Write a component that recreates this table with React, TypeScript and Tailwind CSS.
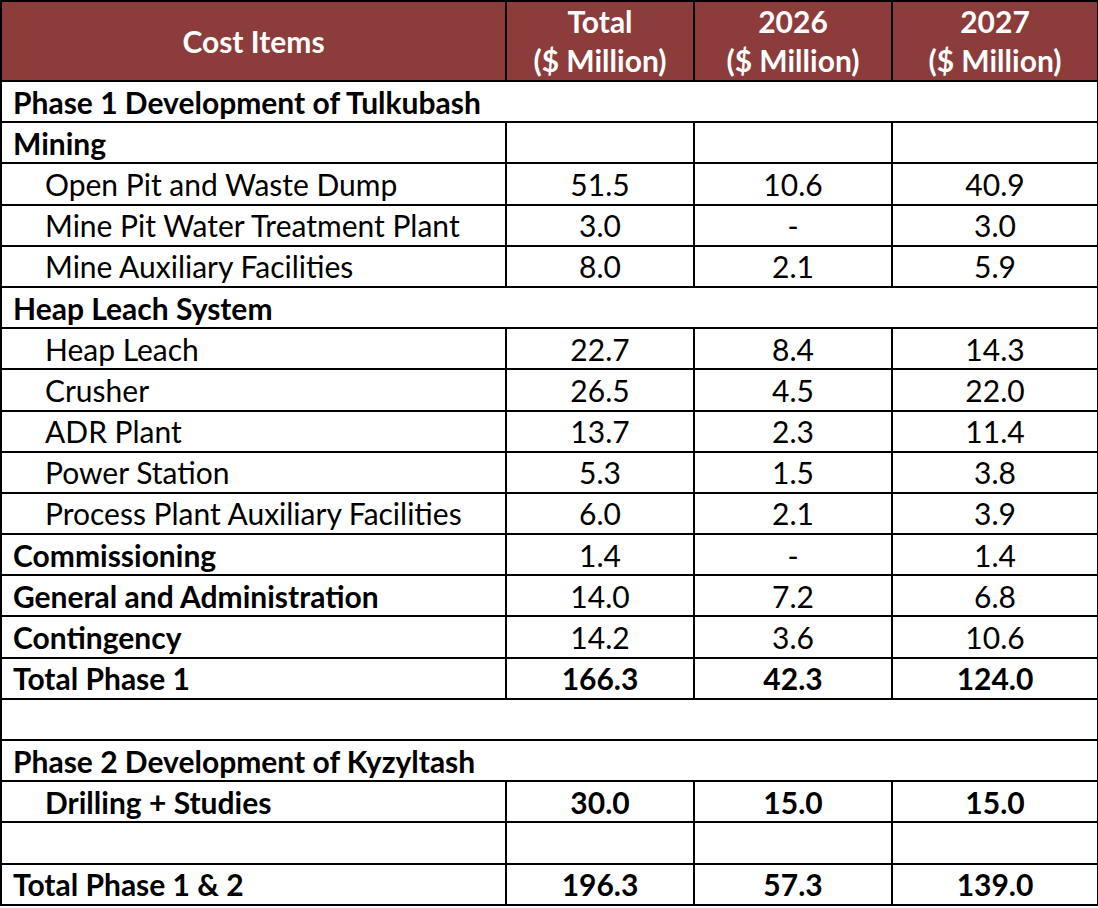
import React from "react";

type Row =
  | { kind: "span"; label: string; bold?: boolean }
  | { kind: "blankSpan" }
  | {
      kind: "data";
      label: string;
      indent?: boolean;
      labelBold?: boolean;
      valuesBold?: boolean;
      values: [string, string, string];
    };

const rows: Row[] = [
  { kind: "span", label: "Phase 1 Development of Tulkubash" },
  { kind: "data", label: "Mining", labelBold: true, values: ["", "", ""] },
  { kind: "data", label: "Open Pit and Waste Dump", indent: true, values: ["51.5", "10.6", "40.9"] },
  { kind: "data", label: "Mine Pit Water Treatment Plant", indent: true, values: ["3.0", "-", "3.0"] },
  { kind: "data", label: "Mine Auxiliary Facilities", indent: true, values: ["8.0", "2.1", "5.9"] },
  { kind: "span", label: "Heap Leach System" },
  { kind: "data", label: "Heap Leach", indent: true, values: ["22.7", "8.4", "14.3"] },
  { kind: "data", label: "Crusher", indent: true, values: ["26.5", "4.5", "22.0"] },
  { kind: "data", label: "ADR Plant", indent: true, values: ["13.7", "2.3", "11.4"] },
  { kind: "data", label: "Power Station", indent: true, values: ["5.3", "1.5", "3.8"] },
  { kind: "data", label: "Process Plant Auxiliary Facilities", indent: true, values: ["6.0", "2.1", "3.9"] },
  { kind: "data", label: "Commissioning", labelBold: true, values: ["1.4", "-", "1.4"] },
  { kind: "data", label: "General and Administration", labelBold: true, values: ["14.0", "7.2", "6.8"] },
  { kind: "data", label: "Contingency", labelBold: true, values: ["14.2", "3.6", "10.6"] },
  { kind: "data", label: "Total Phase 1", labelBold: true, valuesBold: true, values: ["166.3", "42.3", "124.0"] },
  { kind: "blankSpan" },
  { kind: "span", label: "Phase 2 Development of Kyzyltash" },
  { kind: "data", label: "Drilling + Studies", indent: true, labelBold: true, valuesBold: true, values: ["30.0", "15.0", "15.0"] },
  { kind: "data", label: "", values: ["", "", ""] },
  { kind: "data", label: "Total Phase 1 & 2", labelBold: true, valuesBold: true, values: ["196.3", "57.3", "139.0"] },
];

const cell = "border-2 border-black h-[41.2px] p-0 leading-none";

export default function App() {
  return (
    <div className="bg-white w-[1098px] h-[908px] text-black" style={{ fontFamily: '"Lato", "Open Sans", sans-serif' }}>
      <table className="table-fixed border-collapse w-[1097px] text-[30px]">
        <colgroup>
          <col className="w-[505px]" />
          <col className="w-[188px]" />
          <col className="w-[198px]" />
          <col className="w-[206px]" />
        </colgroup>
        <thead>
          <tr className="bg-[#8b3c3b] text-white font-bold h-[80px]">
            <th className="border-2 border-black p-0 text-center align-middle leading-[39px]">Cost Items</th>
            {["Total", "2026", "2027"].map((h) => (
              <th key={h} className="border-2 border-black p-0 text-center align-middle leading-[39px]">
                <div>{h}</div>
                <div>($ Million)</div>
              </th>
            ))}
          </tr>
        </thead>
        <tbody>
          {rows.map((r, i) => {
            if (r.kind === "span") {
              return (
                <tr key={i}>
                  <td colSpan={4} className={`${cell} pl-[11px] font-bold text-left`}>
                    {r.label}
                  </td>
                </tr>
              );
            }
            if (r.kind === "blankSpan") {
              return (
                <tr key={i}>
                  <td colSpan={4} className={cell}></td>
                </tr>
              );
            }
            return (
              <tr key={i}>
                <td
                  className={`${cell} text-left ${r.indent ? "pl-[43px]" : "pl-[11px]"} ${r.labelBold ? "font-bold" : ""}`}
                >
                  {r.label}
                </td>
                {r.values.map((v, j) => (
                  <td key={j} className={`${cell} text-center ${r.valuesBold ? "font-bold" : ""}`}>
                    {v}
                  </td>
                ))}
              </tr>
            );
          })}
        </tbody>
      </table>
    </div>
  );
}
